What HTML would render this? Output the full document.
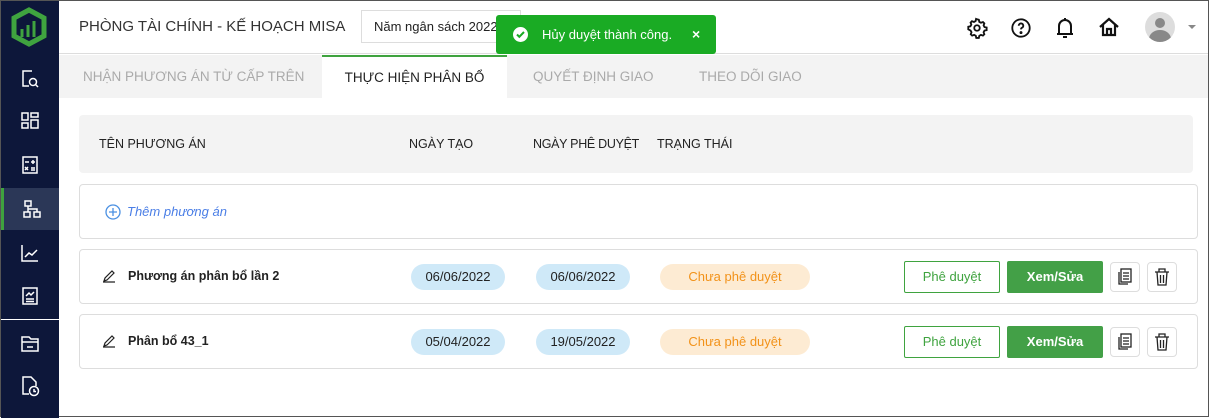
<!DOCTYPE html>
<html><head><meta charset="utf-8"><style>
*{box-sizing:border-box;margin:0;padding:0}
body{width:1209px;height:417px;overflow:hidden;font-family:"Liberation Sans",Arial,sans-serif;background:#fff;position:relative;border:1px solid #555}
.sb{position:absolute;left:0;top:0;width:58px;height:417px;background:#0d173a}
.si{position:absolute;left:0;width:58px;height:42px;display:flex;align-items:center;justify-content:center}
.abs{position:absolute}
.hdr{position:absolute;left:58px;top:0;right:0;height:53px;border-bottom:1px solid #ddd;background:#fff}
.tabs{position:absolute;left:58px;top:54px;right:0;height:43px;background:#f3f3f3}
.tab{position:absolute;top:0;height:43px;line-height:43px;font-size:13.5px;color:#aaa}
.row{position:absolute;left:78px;width:1119px;border:1px solid #ddd;border-radius:4px;background:#fff}
.pill{position:absolute;height:26px;line-height:26px;border-radius:13px;font-size:13px;text-align:center}
.btn{position:absolute;height:32px;line-height:30px;font-size:13px;text-align:center;border-radius:2px}
.ib{position:absolute;width:30px;height:30px;border:1px solid #ddd;border-radius:4px;display:flex;align-items:center;justify-content:center}
.nm{position:absolute;left:48px;top:19px;font-size:12.5px;font-weight:bold;color:#222}
</style></head><body>
<div class="sb">
 <svg class="abs" style="left:8px;top:6px" width="40" height="40" viewBox="0 0 40 40"><path d="M20 3 L35 11 V29 L20 37 L5 29 V11Z" fill="none" stroke="#3fa33f" stroke-width="5"/><path d="M13 30 V22 M19 30 V18 M25 30 V14" stroke="#3fa33f" stroke-width="3"/></svg>
 <div class="si" style="top:56px"><svg width="20" height="20" viewBox="0 0 20 20" fill="none" stroke="#fff" stroke-width="1.5"><path d="M12 3H3v15h6"/><circle cx="13" cy="14" r="3.5"/><path d="M15.5 16.5L18 19"/></svg></div>
 <div class="si" style="top:99px"><svg width="20" height="20" viewBox="0 0 20 20" fill="none" stroke="#fff" stroke-width="1.5"><rect x="2" y="2" width="6" height="7"/><rect x="11" y="2" width="7" height="4"/><rect x="2" y="12" width="6" height="5"/><rect x="11" y="9" width="7" height="8"/></svg></div>
 <div class="si" style="top:143px"><svg width="20" height="20" viewBox="0 0 20 20" fill="none" stroke="#fff" stroke-width="1.5"><rect x="3" y="2" width="14" height="16"/><path d="M5 7h4M13 5v4M11 7h4M5 12l3 3M8 12l-3 3M11 13h4M11 15h4"/></svg></div>
 <div class="si" style="top:187px;background:#2b3757;border-left:3px solid #3fa33f"><svg width="20" height="20" viewBox="0 0 20 20" fill="none" stroke="#fff" stroke-width="1.5"><rect x="3" y="2" width="6" height="5"/><rect x="2" y="13" width="6" height="5"/><rect x="12" y="13" width="6" height="5"/><path d="M6 7v3h9v3M6 10v3"/></svg></div>
 <div class="si" style="top:231px"><svg width="20" height="20" viewBox="0 0 20 20" fill="none" stroke="#fff" stroke-width="1.5"><path d="M2 2v16h16M5 14l4-4 3 2 5-5"/></svg></div>
 <div class="si" style="top:274px"><svg width="20" height="20" viewBox="0 0 20 20" fill="none" stroke="#fff" stroke-width="1.5"><rect x="3" y="2" width="14" height="16"/><path d="M6 10l3-3 2 2 3-3M6 13h8M6 15.5h8"/></svg></div>
 <div class="abs" style="left:0;top:318px;width:58px;height:1px;background:#fff"></div>
 <div class="si" style="top:321px"><svg width="20" height="20" viewBox="0 0 20 20" fill="none" stroke="#fff" stroke-width="1.5"><path d="M2 4h7l2 2h7v12H2z M2 9h16M7 14h6"/></svg></div>
 <div class="si" style="top:364px"><svg width="20" height="22" viewBox="0 0 20 22" fill="none" stroke="#fff" stroke-width="1.5"><path d="M9 19H3V2h8l5 5v4"/><circle cx="14" cy="16" r="4.5"/><path d="M14 14v2.5h2"/></svg></div>
</div>
<div class="hdr">
 <div class="abs" style="left:20px;top:17px;font-size:15px;color:#333">PHÒNG TÀI CHÍNH - KẾ HOẠCH MISA</div>
 <div class="abs" style="left:302px;top:9px;width:160px;height:33px;border:1px solid #ddd;font-size:13px;line-height:31px;padding-left:12px;color:#222">Năm ngân sách 2022</div>
 <svg class="abs" style="left:907px;top:16px" width="22" height="22" viewBox="0 0 24 24" fill="none" stroke="#111" stroke-width="2"><circle cx="12" cy="12" r="3"/><path d="M12 2.5l2 .5.5 2.3 1.8 1 2.2-.8 1.5 1.5-.8 2.2 1 1.8 2.3.5v2.8l-2.3.5-1 1.8.8 2.2-1.5 1.5-2.2-.8-1.8 1-.5 2.300h-2.8l-.5-2.3-1.8-1-2.2.8-1.5-1.5.8-2.2-1-1.8L2.5 13.4v-2.8l2.3-.5 1-1.8-.8-2.2 1.5-1.5 2.2.8 1.8-1 .5-2.3z"/></svg>
 <svg class="abs" style="left:951px;top:16px" width="22" height="22" viewBox="0 0 24 24" fill="none" stroke="#111" stroke-width="2"><circle cx="12" cy="12" r="9.5"/><path d="M9.5 9.5a2.5 2.5 0 1 1 3.5 2.3c-.8.4-1 .9-1 1.7"/><circle cx="12" cy="17" r=".6" fill="#111"/></svg>
 <svg class="abs" style="left:995px;top:15px" width="22" height="24" viewBox="0 0 22 24" fill="none" stroke="#111" stroke-width="2"><path d="M11 2v2M5 18V10a6 6 0 0 1 12 0v8M3 18h16M9 21h4"/></svg>
 <svg class="abs" style="left:1039px;top:15px" width="22" height="22" viewBox="0 0 22 22" fill="none" stroke="#111" stroke-width="2.2"><path d="M2 11L11 3l9 8M5 9v10h12V9M9 19v-6h4v6"/></svg>
 <div class="abs" style="left:1086px;top:11px;width:30px;height:30px;border-radius:50%;background:#ddd;overflow:hidden"><div class="abs" style="left:10px;top:6px;width:10px;height:10px;border-radius:50%;background:#888"></div><div class="abs" style="left:4px;top:18px;width:22px;height:18px;border-radius:50%;background:#888"></div></div>
 <div class="abs" style="left:1129px;top:24px;border:4px solid transparent;border-top:4px solid #888"></div>
</div>
<div class="tabs">
 <div class="tab" style="left:24px">NHẬN PHƯƠNG ÁN TỪ CẤP TRÊN</div>
 <div class="tab" style="left:263px;width:185px;background:#fff;border-top:2px solid #3fa33f;color:#222;text-align:center;line-height:41px">THỰC HIỆN PHÂN BỔ</div>
 <div class="tab" style="left:474px">QUYẾT ĐỊNH GIAO</div>
 <div class="tab" style="left:640px">THEO DÕI GIAO</div>
</div>
<div class="abs" style="left:495px;top:14px;width:220px;height:39px;background:#1aab24;border-radius:3px;color:#fff;font-size:13px">
 <div class="abs" style="left:17px;top:12px;width:15px;height:15px;border-radius:50%;background:#fff"><svg width="15" height="15" viewBox="0 0 15 15"><path d="M4 7.5l2.3 2.3L11 5" stroke="#1aab24" stroke-width="2" fill="none"/></svg></div>
 <div class="abs" style="left:46px;top:12px">Hủy duyệt thành công.</div>
 <div class="abs" style="left:196px;top:11px;font-weight:bold;font-size:14px">×</div>
</div>
<div class="abs" style="left:78px;top:114px;width:1114px;height:58px;background:#f3f3f3;border-radius:4px;font-size:12.5px;color:#222">
 <div class="abs" style="left:20px;top:22px">TÊN PHƯƠNG ÁN</div>
 <div class="abs" style="left:330px;top:22px">NGÀY TẠO</div>
 <div class="abs" style="left:454px;top:22px;letter-spacing:-0.3px">NGÀY PHÊ DUYỆT</div>
 <div class="abs" style="left:578px;top:22px">TRẠNG THÁI</div>
</div>
<div class="row" style="top:183px;height:55px">
 <svg class="abs" style="left:25px;top:19px" width="16" height="16" viewBox="0 0 16 16" fill="none" stroke="#4a90e2" stroke-width="1.3"><circle cx="8" cy="8" r="7"/><path d="M8 4v8M4 8h8"/></svg>
 <div class="abs" style="left:47px;top:19px;font-size:13px;font-style:italic;color:#4a7ee6">Thêm phương án</div>
</div>
<div class="row" style="top:248px;height:55px">
 <svg class="abs" style="left:22px;top:19px" width="14" height="14" viewBox="0 0 14 14" fill="none" stroke="#222" stroke-width="1.2"><path d="M2 12l1-3 7-7 2 2-7 7zM1 13h12"/></svg>
 <div class="nm">Phương án phân bổ lần 2</div>
 <div class="pill" style="left:331px;top:14px;width:94px;background:#cfe9f8;color:#222">06/06/2022</div>
 <div class="pill" style="left:456px;top:14px;width:94px;background:#cfe9f8;color:#222">06/06/2022</div>
 <div class="pill" style="left:580px;top:14px;width:150px;background:#fdebd3;color:#f29219">Chưa phê duyệt</div>
 <div class="btn" style="left:824px;top:11px;width:96px;border:1px solid #3fa33f;color:#3fa33f">Phê duyệt</div>
 <div class="btn" style="left:927px;top:11px;width:96px;background:#43a047;color:#fff;font-weight:bold;line-height:32px">Xem/Sửa</div>
 <div class="ib" style="left:1030px;top:12px"><svg width="16" height="18" viewBox="0 0 16 18" fill="none" stroke="#222" stroke-width="1.3"><rect x="4" y="1" width="10" height="13"/><path d="M2 4v12h9M6 5h6M6 8h6M6 11h6"/></svg></div>
 <div class="ib" style="left:1067px;top:12px"><svg width="16" height="18" viewBox="0 0 16 18" fill="none" stroke="#222" stroke-width="1.3"><path d="M1 4h14M5 4V1h6v3M3 4l1 13h8l1-13M6.5 7v8M9.5 7v8"/></svg></div>
</div>
<div class="row" style="top:313px;height:55px">
 <svg class="abs" style="left:22px;top:19px" width="14" height="14" viewBox="0 0 14 14" fill="none" stroke="#222" stroke-width="1.2"><path d="M2 12l1-3 7-7 2 2-7 7zM1 13h12"/></svg>
 <div class="nm">Phân bổ 43_1</div>
 <div class="pill" style="left:331px;top:14px;width:94px;background:#cfe9f8;color:#222">05/04/2022</div>
 <div class="pill" style="left:456px;top:14px;width:94px;background:#cfe9f8;color:#222">19/05/2022</div>
 <div class="pill" style="left:580px;top:14px;width:150px;background:#fdebd3;color:#f29219">Chưa phê duyệt</div>
 <div class="btn" style="left:824px;top:11px;width:96px;border:1px solid #3fa33f;color:#3fa33f">Phê duyệt</div>
 <div class="btn" style="left:927px;top:11px;width:96px;background:#43a047;color:#fff;font-weight:bold;line-height:32px">Xem/Sửa</div>
 <div class="ib" style="left:1030px;top:12px"><svg width="16" height="18" viewBox="0 0 16 18" fill="none" stroke="#222" stroke-width="1.3"><rect x="4" y="1" width="10" height="13"/><path d="M2 4v12h9M6 5h6M6 8h6M6 11h6"/></svg></div>
 <div class="ib" style="left:1067px;top:12px"><svg width="16" height="18" viewBox="0 0 16 18" fill="none" stroke="#222" stroke-width="1.3"><path d="M1 4h14M5 4V1h6v3M3 4l1 13h8l1-13M6.5 7v8M9.5 7v8"/></svg></div>
</div>
</body></html>
